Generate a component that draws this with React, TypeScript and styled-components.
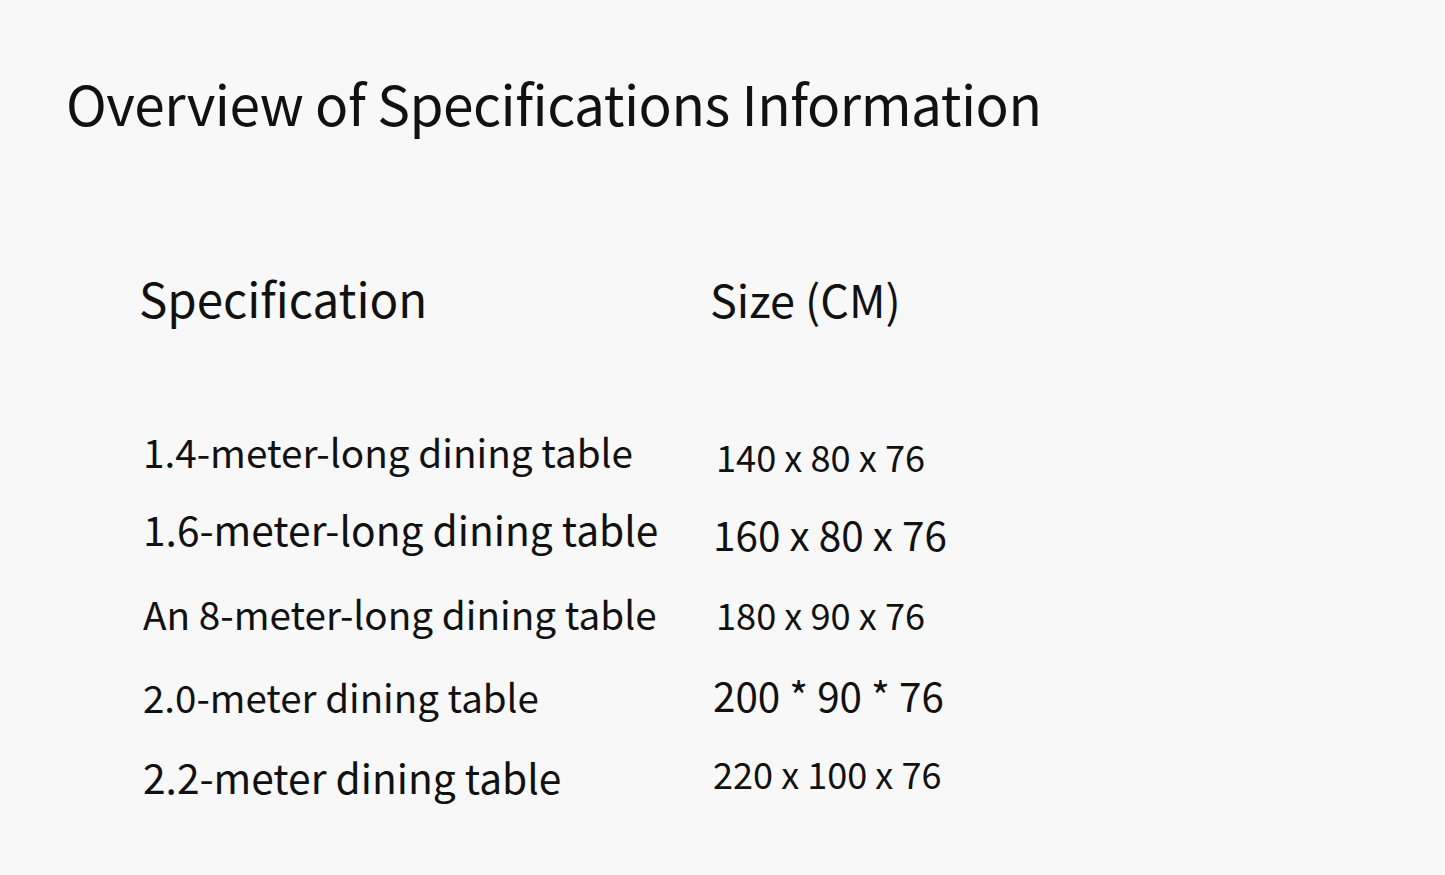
import React from "react";
import styled, { createGlobalStyle } from "styled-components";

const GlobalStyle = createGlobalStyle`
  html, body {
    margin: 0;
    padding: 0;
    background: #f8f8f8;
  }
  body {
    font-family: "Noto Sans CJK SC", "Noto Sans", sans-serif;
    color: #111;
  }
`;

const Page = styled.div`
  width: 1445px;
  height: 875px;
  box-sizing: border-box;
  padding: 66px 0 0 66px;
  background: #f8f8f8;
  overflow: hidden;
`;

const Title = styled.h1`
  margin: 0;
  font-size: 55px;
  font-weight: 400;
  line-height: 72px;
  letter-spacing: -0.5px;
`;

const Table = styled.div`
  margin: 130px 0 0 73px;
`;

const HeaderRow = styled.div`
  display: grid;
  grid-template-columns: 571px auto;
  align-items: baseline;
  margin-bottom: 78px;
`;

const HeadCell = styled.div<{ $size: number }>`
  font-size: ${(p) => p.$size}px;
  line-height: 60px;
`;

const Row = styled.div`
  display: grid;
  grid-template-columns: 571px auto;
  align-items: start;
  height: 81px;
`;

// $top sets where the baseline lands inside the 81px row
const Cell = styled.div<{ $size: number; $top: number; $indent?: number }>`
  font-size: ${(p) => p.$size}px;
  line-height: ${(p) => p.$size}px;
  padding-top: ${(p) => p.$top}px;
  padding-left: ${(p) => p.$indent ?? 4}px;
  white-space: nowrap;
`;

type Spec = {
  name: string;
  nameSize: number;
  nameTop: number;
  size: string;
  sizeSize: number;
  sizeTop: number;
  sizeIndent: number;
};

const specs: Spec[] = [
  { name: "1.4-meter-long dining table", nameSize: 38.7, nameTop: 25, size: "140 x 80 x 76", sizeSize: 36.2, sizeTop: 31, sizeIndent: 6 },
  { name: "1.6-meter-long dining table", nameSize: 40.7, nameTop: 21, size: "160 x 80 x 76", sizeSize: 40.5, sizeTop: 26, sizeIndent: 3 },
  { name: "An 8-meter-long dining table", nameSize: 38.7, nameTop: 25, size: "180 x 90 x 76", sizeSize: 36.2, sizeTop: 27, sizeIndent: 6 },
  { name: "2.0-meter dining table", nameSize: 38.5, nameTop: 27, size: "200 * 90 * 76", sizeSize: 40.4, sizeTop: 25, sizeIndent: 3 },
  { name: "2.2-meter dining table", nameSize: 40.7, nameTop: 26, size: "220 x 100 x 76", sizeSize: 36.1, sizeTop: 24, sizeIndent: 3 },
];

export default function App() {
  return (
    <Page>
      <GlobalStyle />
      <Title>Overview of Specifications Information</Title>
      <Table>
        <HeaderRow>
          <HeadCell $size={47.5}>Specification</HeadCell>
          <HeadCell $size={45}>Size (CM)</HeadCell>
        </HeaderRow>
        {specs.map((s) => (
          <Row key={s.name}>
            <Cell $size={s.nameSize} $top={s.nameTop}>
              {s.name}
            </Cell>
            <Cell $size={s.sizeSize} $top={s.sizeTop} $indent={s.sizeIndent}>
              {s.size}
            </Cell>
          </Row>
        ))}
      </Table>
    </Page>
  );
}
